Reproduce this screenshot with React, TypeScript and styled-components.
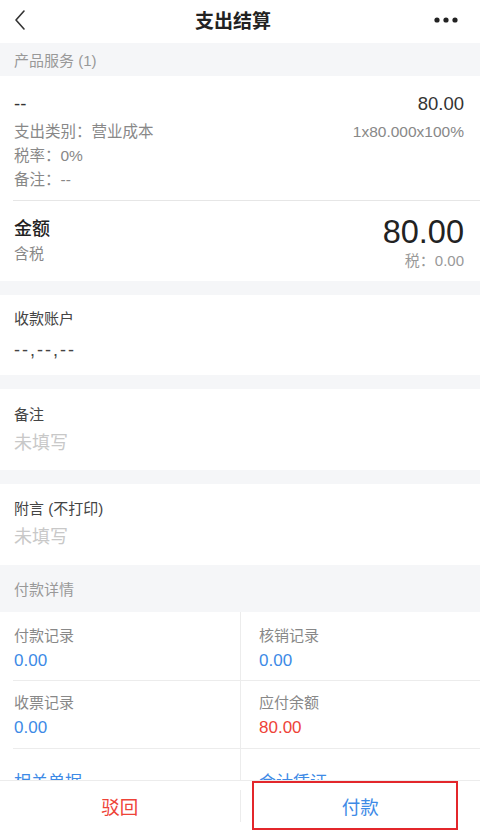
import React from "react";
import styled, { createGlobalStyle } from "styled-components";

const GlobalStyle = createGlobalStyle`
  * { box-sizing: border-box; }
  html, body { margin: 0; padding: 0; background: #fff; }
  body {
    font-family: "Liberation Sans", "Noto Sans CJK SC", sans-serif;
    color: #333;
  }
`;

const Page = styled.div`
  width: 480px;
  height: 831px;
  display: flex;
  flex-direction: column;
  background: #fff;
  overflow: hidden;
`;

const NavBar = styled.div`
  height: 43px;
  flex: none;
  display: flex;
  align-items: center;
  justify-content: space-between;
  padding: 0 22px 4px 8px;
`;

const NavTitle = styled.div`
  font-size: 19px;
  font-weight: bold;
  color: #222;
`;

const NavIcon = styled.div`
  width: 24px;
  height: 24px;
  display: flex;
  align-items: center;
  justify-content: center;
`;

const Content = styled.div`
  flex: 1;
  overflow: hidden;
`;

const SectionHead = styled.div<{ h: number }>`
  height: ${p => p.h}px;
  background: #f5f6f8;
  padding: 0 14px;
  display: flex;
  align-items: center;
  font-size: 15px;
  color: #999;
`;

const Gap = styled.div`
  height: 14px;
  background: #f5f6f8;
`;

const ProductRow = styled.div`
  padding: 14px 16px 8px 14px;
  display: flex;
  justify-content: space-between;
`;

const Col = styled.div<{ right?: boolean; top?: number }>`
  display: flex;
  flex-direction: column;
  align-items: ${p => (p.right ? "flex-end" : "flex-start")};
  padding-top: ${p => p.top || 0}px;
`;

const MainLine = styled.div`
  font-size: 18.5px;
  line-height: 28px;
  color: #333;
`;

const SubLine = styled.div<{ first?: boolean }>`
  font-size: 15.5px;
  line-height: 24px;
  color: #888;
  margin-top: ${p => (p.first ? 2 : 0)}px;
`;

const Divider = styled.div`
  height: 1px;
  margin-left: 13px;
  background: #e6e6e6;
`;

const AmountRow = styled.div`
  height: 80px;
  padding: 0 16px 0 14px;
  display: flex;
  justify-content: space-between;
`;

const AmountLabel = styled.div`
  font-size: 18px;
  line-height: 24px;
  font-weight: 500;
  color: #222;
`;

const AmountNote = styled.div`
  font-size: 15px;
  line-height: 26px;
  color: #888;
`;

const BigValue = styled.div`
  font-size: 32.5px;
  line-height: 36px;
  color: #222;
`;

const TaxNote = styled.div`
  font-size: 15px;
  line-height: 22px;
  color: #999;
`;

const Field = styled.div<{ h: number; top: number }>`
  height: ${p => p.h}px;
  padding: ${p => p.top}px 14px 0;
`;

const FieldLabel = styled.div`
  font-size: 15px;
  line-height: 24px;
  color: #444;
`;

const FieldValue = styled.div<{ empty?: boolean }>`
  font-size: 18px;
  line-height: ${p => (p.empty ? 32 : 38)}px;
  color: ${p => (p.empty ? "#c8c8c8" : "#444")};
  letter-spacing: ${p => (p.empty ? 0 : 2)}px;
`;

const Grid = styled.div`
  display: grid;
  grid-template-columns: 240px 240px;
`;

const Cell = styled.div<{ side: "l" | "r"; h: number; top: number; line?: boolean }>`
  height: ${p => p.h}px;
  padding-top: ${p => p.top}px;
  padding-left: ${p => (p.side === "l" ? 1 : 18)}px;
  margin-left: ${p => (p.side === "l" ? 13 : 0)}px;
  border-bottom: ${p => (p.line ? "1px solid #ececec" : "none")};
  border-left: ${p => (p.side === "r" ? "1px solid #ececec" : "none")};
`;

const CellLabel = styled.div`
  font-size: 15px;
  line-height: 24px;
  color: #888;
`;

const CellValue = styled.div<{ tone: "blue" | "red" }>`
  font-size: 17px;
  line-height: 26px;
  color: ${p => (p.tone === "red" ? "#ee4338" : "#3d8ae6")};
`;

const CellLink = styled.div`
  font-size: 17px;
  line-height: 24px;
  color: #3d8ae6;
`;

const BottomBar = styled.div`
  height: 51px;
  flex: none;
  position: relative;
  display: flex;
  align-items: center;
  border-top: 1px solid #ececec;
  background: #fff;
`;

const BarButton = styled.div<{ tone: "blue" | "red" }>`
  flex: 1;
  text-align: center;
  font-size: 18.5px;
  color: ${p => (p.tone === "red" ? "#ee4338" : "#3d8ae6")};
`;

const BarSep = styled.div`
  width: 1px;
  height: 32px;
  background: #ececec;
`;

const Highlight = styled.div`
  position: absolute;
  left: 252px;
  top: 0;
  width: 206px;
  height: 49px;
  border: 2px solid #e3262b;
  pointer-events: none;
`;

export default function App() {
  return (
    <Page>
      <GlobalStyle />
      <NavBar>
        <NavIcon>
          <svg width="14" height="22" viewBox="0 0 14 22">
            <path d="M11 2 L3 11 L11 20" fill="none" stroke="#333" strokeWidth="1.6" strokeLinecap="round" strokeLinejoin="round" />
          </svg>
        </NavIcon>
        <NavTitle>支出结算</NavTitle>
        <NavIcon>
          <svg width="24" height="6" viewBox="0 0 24 6">
            <circle cx="3" cy="3" r="2.6" fill="#222" />
            <circle cx="12" cy="3" r="2.6" fill="#222" />
            <circle cx="21" cy="3" r="2.6" fill="#222" />
          </svg>
        </NavIcon>
      </NavBar>
      <Content>
        <SectionHead h={33}>产品服务 (1)</SectionHead>
        <ProductRow>
          <Col>
            <MainLine>--</MainLine>
            <SubLine first>支出类别：营业成本</SubLine>
            <SubLine>税率：0%</SubLine>
            <SubLine>备注：--</SubLine>
          </Col>
          <Col right>
            <MainLine>80.00</MainLine>
            <SubLine first>1x80.000x100%</SubLine>
          </Col>
        </ProductRow>
        <Divider />
        <AmountRow>
          <Col top={16}>
            <AmountLabel>金额</AmountLabel>
            <AmountNote>含税</AmountNote>
          </Col>
          <Col right top={13}>
            <BigValue>80.00</BigValue>
            <TaxNote>税：0.00</TaxNote>
          </Col>
        </AmountRow>
        <Gap />
        <Field h={80} top={12}>
          <FieldLabel>收款账户</FieldLabel>
          <FieldValue>--,--,--</FieldValue>
        </Field>
        <Gap />
        <Field h={81} top={14}>
          <FieldLabel>备注</FieldLabel>
          <FieldValue empty>未填写</FieldValue>
        </Field>
        <Gap />
        <Field h={81} top={13}>
          <FieldLabel>附言 (不打印)</FieldLabel>
          <FieldValue empty>未填写</FieldValue>
        </Field>
        <SectionHead h={47}>付款详情</SectionHead>
        <Grid>
          <Cell side="l" h={69} top={12} line>
            <CellLabel>付款记录</CellLabel>
            <CellValue tone="blue">0.00</CellValue>
          </Cell>
          <Cell side="r" h={69} top={12} line>
            <CellLabel>核销记录</CellLabel>
            <CellValue tone="blue">0.00</CellValue>
          </Cell>
          <Cell side="l" h={68} top={10} line>
            <CellLabel>收票记录</CellLabel>
            <CellValue tone="blue">0.00</CellValue>
          </Cell>
          <Cell side="r" h={68} top={10} line>
            <CellLabel>应付余额</CellLabel>
            <CellValue tone="red">80.00</CellValue>
          </Cell>
          <Cell side="l" h={68} top={22}>
            <CellLink>相关单据</CellLink>
          </Cell>
          <Cell side="r" h={68} top={22}>
            <CellLink>会计凭证</CellLink>
          </Cell>
        </Grid>
      </Content>
      <BottomBar>
        <BarButton tone="red">驳回</BarButton>
        <BarSep />
        <BarButton tone="blue">付款</BarButton>
        <Highlight />
      </BottomBar>
    </Page>
  );
}
